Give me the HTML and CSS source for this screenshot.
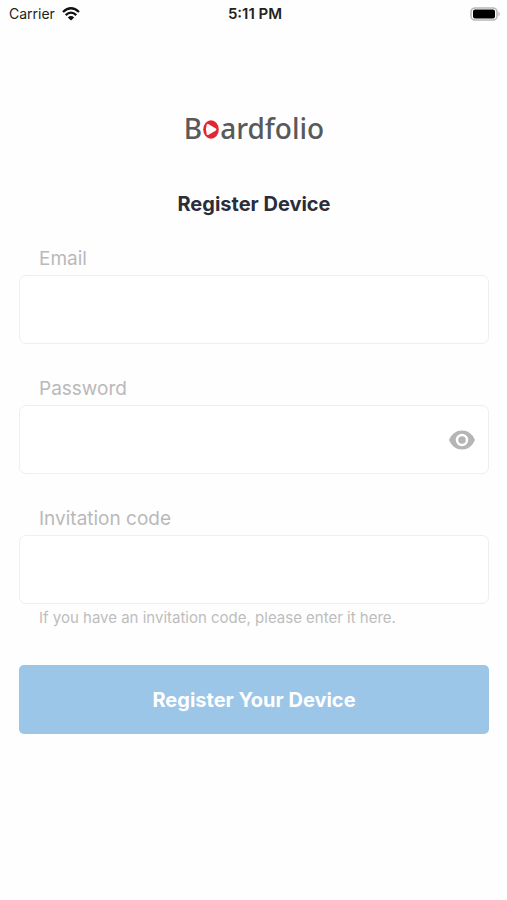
FILE: index.html
```html
<!DOCTYPE html>
<html lang="en">
<head>
<meta charset="utf-8">
<meta name="viewport" content="width=device-width, initial-scale=1">
<title>Register Device</title>
<link rel="stylesheet" href="styles.css">
</head>
<body>
<header class="status">
  <div class="carrier">
    <span>Carrier</span>
    <svg class="wifi" viewBox="0 0 18 14" aria-hidden="true">
      <path d="M1 5Q9-2.500 17 5M3.700 8.100Q9 3.200 14.300 8.100" fill="none" stroke="#111" stroke-width="2.300"/>
      <path d="M5.800 10.400Q9 7.600 12.200 10.400L9 13.600Z" fill="#111"/>
    </svg>
  </div>
  <time class="clock">5:11 PM</time>
  <svg class="battery" viewBox="0 0 32 16" aria-hidden="true">
    <rect x="2" y="2" width="26" height="12" rx="4" fill="#fff" stroke="#b8b8b8" stroke-width="1.600"/>
    <rect x="4" y="3.500" width="22" height="9" rx="2" fill="#000"/>
    <path d="M29.500 5.500Q32 8 29.500 10.500Z" fill="#b0b0b0"/>
  </svg>
</header>
<main class="page">
  <div class="logo">
    <span>B</span>
    <svg class="logo-o" viewBox="0 0 16 19" aria-hidden="true">
      <ellipse cx="8" cy="9.500" rx="7.800" ry="9.200" fill="#e3262f"/>
      <path d="M3.700 4.600Q2.100 9.500 3.700 14.400Q4.200 15.400 5.200 14.900L12.900 10.500Q14 9.500 12.900 8.500L5.200 4.100Q4.200 3.600 3.700 4.600Z" fill="#fff"/>
    </svg>
    <span>ardfolio</span>
  </div>
  <h1 class="title">Register Device</h1>
  <form class="form">
    <div class="field">
      <label class="label" for="email">Email</label>
      <input class="input" id="email" type="email">
    </div>
    <div class="field">
      <label class="label" for="password">Password</label>
      <div class="secret">
        <input class="input" id="password" type="password">
        <button class="reveal" type="button" aria-label="Show password">
          <svg viewBox="0 0 26 20" aria-hidden="true">
            <path d="M0 10Q4 .5 13 .5T26 10Q22 19.500 13 19.500T0 10Z" fill="#b5b5b5"/>
            <circle cx="13" cy="10" r="5" fill="#b5b5b5" stroke="#fff" stroke-width="2.500"/>
          </svg>
        </button>
      </div>
    </div>
    <div class="field">
      <label class="label" for="code">Invitation code</label>
      <input class="input" id="code" type="text" aria-describedby="hint">
      <p class="hint" id="hint">If you have an invitation code, please enter it here.</p>
    </div>
    <button class="submit" type="submit">Register Your Device</button>
  </form>
</main>
</body>
</html>
```
FILE: styles.css
```css
* {
  box-sizing: border-box;
}

body {
  margin: 0;
  background: #fefefe;
  color: #2a2d3a;
  font-family: Inter, "Liberation Sans", sans-serif;
}

.status {
  display: grid;
  grid-template-columns: 1fr auto 1fr;
  align-items: center;
  height: 27px;
  padding: 0 6px 0 9px;
  color: #222;
  font-size: 14px;
}

.carrier {
  display: flex;
  align-items: center;
  gap: 7px;
}

.wifi {
  width: 18px;
  height: 14px;
}

.clock {
  font-size: 15px;
  font-weight: 600;
}

.battery {
  justify-self: end;
  width: 32px;
  height: 16px;
}

.page {
  padding: 81px 18px 0 19px;
}

.logo {
  display: flex;
  justify-content: center;
  align-items: baseline;
  color: #58595b;
  font-family: "Noto Sans", sans-serif;
  font-size: 28px;
  font-weight: 500;
  line-height: 40px;
}

.logo-o {
  width: 16px;
  height: 19px;
  margin: 0 1px -1px;
}

.title {
  margin: 42px 0 0;
  font-size: 20px;
  font-weight: 700;
  line-height: 28px;
  text-align: center;
}

.form {
  margin-top: 28px;
}

.field {
  margin-bottom: 32px;
}

.label {
  display: block;
  padding-left: 20px;
  color: #b9b9b9;
  font-size: 19px;
  line-height: 25px;
  margin-bottom: 4px;
}

.input {
  display: block;
  width: 100%;
  height: 69px;
  padding: 0 20px;
  border: 1px solid #eee;
  border-radius: 7px;
  background: #fff;
  font: inherit;
  font-size: 19px;
}

.secret {
  position: relative;
}

.secret .input {
  padding-right: 56px;
}

.reveal {
  position: absolute;
  top: 0;
  right: 0;
  bottom: 0;
  width: 54px;
  padding: 0 14px;
  border: 0;
  background: none;
}

.reveal svg {
  display: block;
  width: 26px;
  height: 20px;
}

.hint {
  margin: 4px 0 0;
  padding-left: 20px;
  color: #bdbdbd;
  font-size: 15px;
  line-height: 20px;
}

.submit {
  display: block;
  width: 100%;
  height: 69px;
  margin-top: 37px;
  border: 0;
  border-radius: 5px;
  background: #9cc6e8;
  color: #fff;
  font: inherit;
  font-size: 20px;
  font-weight: 700;
}
```
